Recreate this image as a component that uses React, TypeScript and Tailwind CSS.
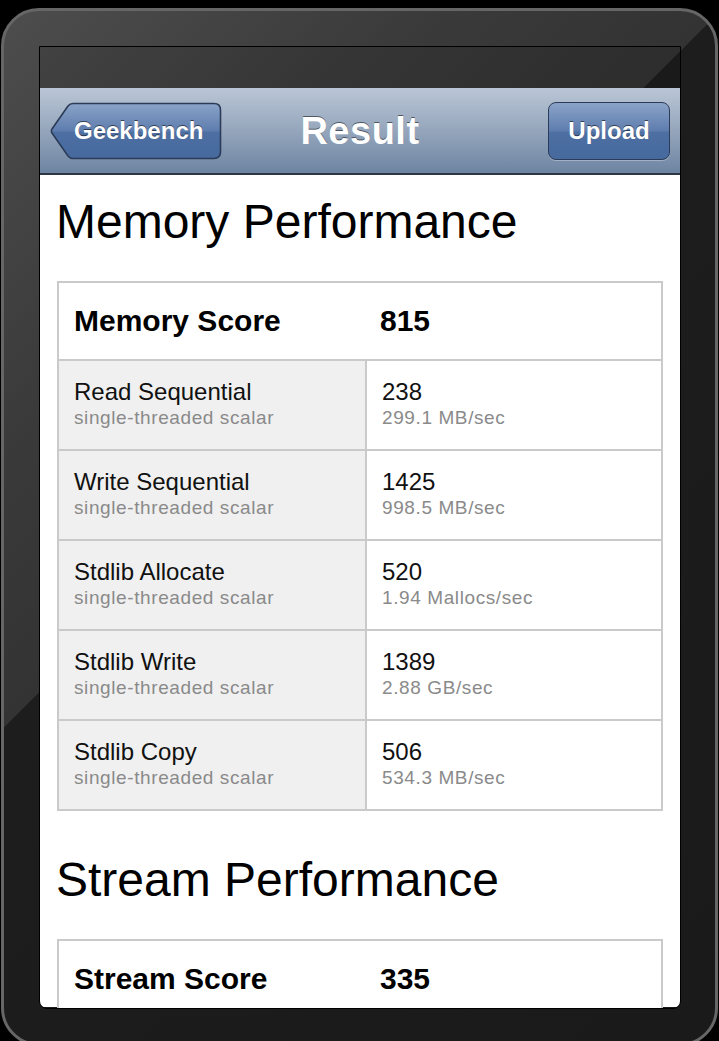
import React from "react";

const rows = [
  ["Read Sequential", "238", "299.1 MB/sec"],
  ["Write Sequential", "1425", "998.5 MB/sec"],
  ["Stdlib Allocate", "520", "1.94 Mallocs/sec"],
  ["Stdlib Write", "1389", "2.88 GB/sec"],
  ["Stdlib Copy", "506", "534.3 MB/sec"],
];

function BackButton() {
  return (
    <div className="relative flex h-[58px] w-[172px] items-center justify-start">
      <svg
        className="absolute inset-0"
        width="172"
        height="58"
        viewBox="0 0 172 58"
      >
        <defs>
          <linearGradient id="bb" x1="0" y1="0" x2="0" y2="1">
            <stop offset="0" stopColor="#8aa3c8" />
            <stop offset="0.5" stopColor="#5e7dae" />
            <stop offset="0.52" stopColor="#4d6fa2" />
            <stop offset="1" stopColor="#46699e" />
          </linearGradient>
        </defs>
        <path
          d="M 23 1.5 L 164 1.5 Q 170.5 1.5 170.5 8 L 170.5 50 Q 170.5 56.5 164 56.5 L 23 56.5 Q 20 56.5 18 54 L 2 31 Q 0.8 29 2 27 L 18 4 Q 20 1.5 23 1.5 Z"
          fill="url(#bb)"
          stroke="#2c3c58"
          strokeWidth="1.6"
        />
      </svg>
      <span className="relative pl-[24px] text-[24px] font-bold leading-none text-white [text-shadow:0_-1px_0_rgba(0,0,0,0.55)]">
        Geekbench
      </span>
    </div>
  );
}

function UploadButton() {
  return (
    <div className="flex h-[58px] w-[122px] items-center justify-center rounded-[8px] border-[1.5px] border-[#2c3c58] bg-[linear-gradient(180deg,#8aa3c8_0%,#5e7dae_50%,#4d6fa2_52%,#46699e_100%)] shadow-[0_1px_0_rgba(255,255,255,0.3)]">
      <span className="text-[24px] font-bold leading-none text-white [text-shadow:0_-1px_0_rgba(0,0,0,0.55)]">
        Upload
      </span>
    </div>
  );
}

function ScoreTable({
  label,
  score,
  items,
}: {
  label: string;
  score: string;
  items: string[][];
}) {
  return (
    <div className="mx-[17px] border-2 border-[#cacaca]">
      <div className="flex h-[76px] items-center bg-white">
        <div className="w-[308px] shrink-0 pl-[15px] text-[30px] font-bold leading-none text-black">
          {label}
        </div>
        <div className="pl-[13px] text-[30px] font-bold leading-none text-black">
          {score}
        </div>
      </div>
      {items.map(([name, val, sub]) => (
        <div key={name} className="flex h-[90px] border-t-2 border-[#cacaca]">
          <div className="w-[308px] shrink-0 border-r-2 border-[#cacaca] bg-[#f0f0f0] pl-[15px] pt-[19px]">
            <div className="text-[24px] leading-[24px] text-[#111]">{name}</div>
            <div className="mt-[3px] text-[19px] leading-[22px] tracking-[0.6px] text-[#8a8a8a]">
              single-threaded scalar
            </div>
          </div>
          <div className="flex-1 bg-white pl-[15px] pt-[19px]">
            <div className="text-[24px] leading-[24px] text-[#111]">{val}</div>
            <div className="mt-[3px] text-[19px] leading-[22px] tracking-[0.6px] text-[#8a8a8a]">
              {sub}
            </div>
          </div>
        </div>
      ))}
    </div>
  );
}

export default function App() {
  return (
    <div
      className="h-[1041px] w-[719px] overflow-hidden bg-black pt-[8px] pl-[1px]"
      style={{ fontFamily: '"Liberation Sans", Arial, sans-serif' }}
    >
      <div className="h-[1038px] w-[717px] rounded-[38px] border-[3px] border-[#666666] bg-[linear-gradient(135deg,#4d4d4d_0%,#3a3a3a_25%,#333333_41.1%,#1d1d1d_41.1%,#1a1a1a_100%)] pl-[35px] pt-[35px]">
        <div className="h-[963px] w-[642px] overflow-hidden rounded-b-[8px] border border-black">
          <div className="h-[41px] bg-black/10" />
          <div className="grid h-[87px] grid-cols-[1fr_auto_1fr] items-center border-b-2 border-[#2d3645] bg-[linear-gradient(180deg,#bac6d6_0%,#95a6bc_50%,#6d84a2_100%)] px-[10px]">
            <div className="flex justify-start">
              <BackButton />
            </div>
            <div className="text-[38px] font-bold leading-none tracking-[0.5px] text-white [text-shadow:0_-1px_0_rgba(0,0,0,0.5)]">
              Result
            </div>
            <div className="flex justify-end">
              <UploadButton />
            </div>
          </div>
          <div className="h-[832px] bg-white pt-[19px]">
            <h1 className="pl-[16px] text-[48px] font-normal leading-[55px] text-black">
              Memory Performance
            </h1>
            <div className="mt-[32px]">
              <ScoreTable label="Memory Score" score="815" items={rows} />
            </div>
            <h1 className="mt-[41px] pl-[16px] text-[48px] font-normal leading-[55px] text-black">
              Stream Performance
            </h1>
            <div className="mt-[32px]">
              <ScoreTable label="Stream Score" score="335" items={[]} />
            </div>
          </div>
        </div>
      </div>
    </div>
  );
}
